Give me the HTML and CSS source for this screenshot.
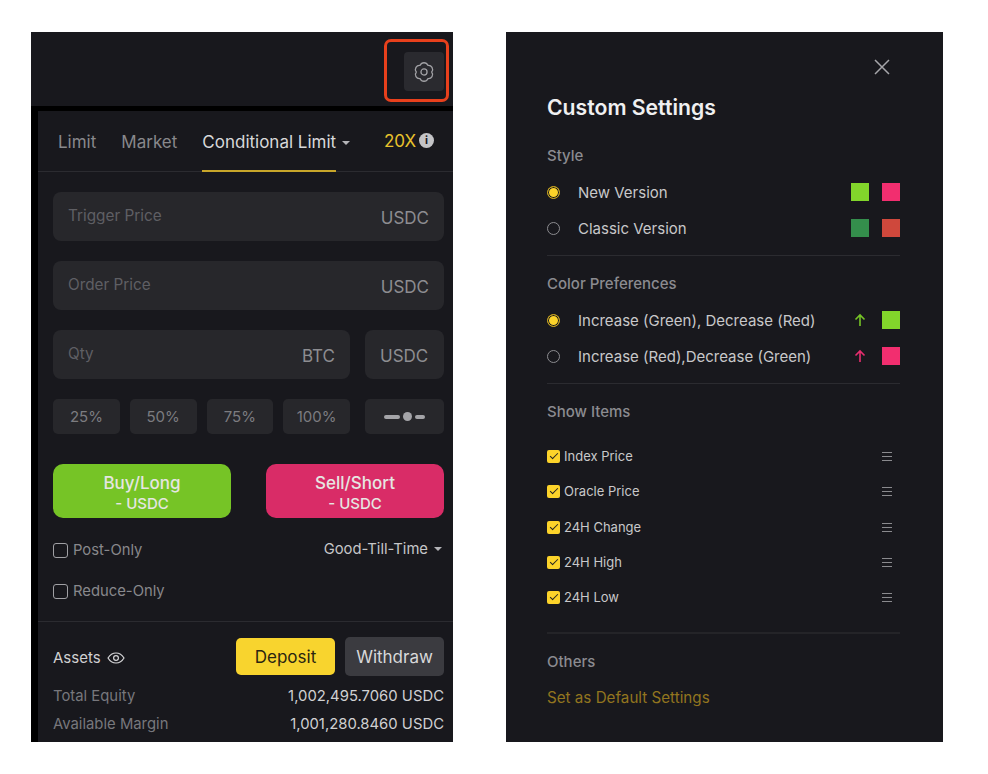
FILE: index.html
```html
<!DOCTYPE html>
<html lang="en">

<head>
    <meta charset="UTF-8" />
    <meta name="viewport" content="width=device-width, initial-scale=1.0" />
    <title>Custom Settings</title>
    <link rel="stylesheet" href="styles.css">
</head>

<body>
    <div class="page">
        <div class="trade">
            <div class="topbar">
                <div class="gear-mark">
                    <button class="gear">
                        <svg width="22" height="22" viewBox="0 0 18 18" fill="none" stroke="#a2a2a6" stroke-width="1.050">
                            <path d="M5.850 3.540A3.400 3.400 0 0 1 12.150 3.540A3.400 3.400 0 0 1 15.300 9A3.400 3.400 0 0 1 12.150 14.460A3.400 3.400 0 0 1 5.850 14.460A3.400 3.400 0 0 1 2.700 9A3.400 3.400 0 0 1 5.850 3.540Z" stroke-linejoin="round" />
                            <circle cx="9" cy="9" r="2.500" />
                        </svg>
                    </button>
                </div>
            </div>
            <div class="order">
                <div class="tabs">
                    <span class="tab">Limit</span>
                    <span class="tab">Market</span>
                    <span class="tab tab-active">Conditional Limit<i class="caret caret-tab"></i></span>
                    <span class="leverage">20X<b class="info">i</b></span>
                </div>
                <div class="form">
                    <div class="field"><span class="hint">Trigger Price</span><span class="unit">USDC</span></div>
                    <div class="field"><span class="hint">Order Price</span><span class="unit">USDC</span></div>
                    <div class="qty-row">
                        <div class="field field-qty"><span class="hint">Qty</span><span class="unit">BTC</span></div>
                        <div class="field field-unit"><span class="unit">USDC</span></div>
                    </div>
                    <div class="pct-row">
                        <div class="pct-group">
                            <span class="pct">25%</span>
                            <span class="pct">50%</span>
                            <span class="pct">75%</span>
                            <span class="pct">100%</span>
                        </div>
                        <span class="slider-btn"><i class="dash dash-long"></i><i class="dot"></i><i class="dash"></i></span>
                    </div>
                    <div class="action-row">
                        <button class="action buy">Buy/Long<small>- USDC</small></button>
                        <button class="action sell">Sell/Short<small>- USDC</small></button>
                    </div>
                    <div class="opt-row opt-row-first">
                        <label class="opt"><i class="box"></i>Post-Only</label>
                        <span class="tif">Good-Till-Time<i class="caret"></i></span>
                    </div>
                    <div class="opt-row">
                        <label class="opt"><i class="box"></i>Reduce-Only</label>
                    </div>
                </div>
                <div class="assets">
                    <div class="assets-head">
                        <span class="assets-title">Assets
                            <svg width="18" height="12" viewBox="0 0 18 12" fill="none" stroke="#d6d6d8" stroke-width="1.2">
                                <path d="M1 6c2-3.300 4.700-5 8-5s6 1.700 8 5c-2 3.300-4.700 5-8 5S3 9.300 1 6z" />
                                <circle cx="9" cy="6" r="2.400" />
                            </svg>
                        </span>
                        <div class="assets-btns">
                            <button class="deposit">Deposit</button>
                            <button class="withdraw">Withdraw</button>
                        </div>
                    </div>
                    <div class="stat stat-first"><span>Total Equity</span><b>1,002,495.7060 USDC</b></div>
                    <div class="stat"><span>Available Margin</span><b>1,001,280.8460 USDC</b></div>
                </div>
            </div>
        </div>

        <div class="settings">
            <div class="close-row">
                <svg width="16" height="16" viewBox="0 0 16 16" stroke="#a6a6aa" stroke-width="1.500">
                    <path d="M1 1l14 14M15 1L1 15" />
                </svg>
            </div>
            <h2>Custom Settings</h2>

            <h3 class="label label-style">Style</h3>
            <div class="row"><i class="radio radio-on"></i><span class="row-text">New Version</span><i class="swatch up"></i><i class="swatch down"></i></div>
            <div class="row"><i class="radio"></i><span class="row-text">Classic Version</span><i class="swatch up-classic"></i><i class="swatch down-classic"></i></div>
            <hr class="rule rule-style">

            <h3 class="label">Color Preferences</h3>
            <div class="row">
                <i class="radio radio-on"></i><span class="row-text">Increase (Green), Decrease (Red)</span>
                <svg class="arrow" width="14" height="14" viewBox="0 0 14 14" fill="none" stroke="#76c426" stroke-width="1.600"><path d="M7 13V2M2.500 6.500L7 2l4.500 4.500" /></svg>
                <i class="swatch up"></i>
            </div>
            <div class="row">
                <i class="radio"></i><span class="row-text">Increase (Red),Decrease (Green)</span>
                <svg class="arrow" width="14" height="14" viewBox="0 0 14 14" fill="none" stroke="#e62e6e" stroke-width="1.600"><path d="M7 13V2M2.500 6.500L7 2l4.500 4.500" /></svg>
                <i class="swatch down"></i>
            </div>
            <hr class="rule rule-color">

            <h3 class="label">Show Items</h3>
            <ul class="items">
                <li><i class="check"></i><span class="item-name">Index Price</span><i class="grip"></i></li>
                <li><i class="check"></i><span class="item-name">Oracle Price</span><i class="grip"></i></li>
                <li><i class="check"></i><span class="item-name">24H Change</span><i class="grip"></i></li>
                <li><i class="check"></i><span class="item-name">24H High</span><i class="grip"></i></li>
                <li><i class="check"></i><span class="item-name">24H Low</span><i class="grip"></i></li>
            </ul>
            <hr class="rule rule-items">

            <h3 class="label">Others</h3>
            <a class="default-link">Set as Default Settings</a>
        </div>
    </div>
</body>

</html>
```

FILE: styles.css
```css
:root {
    --panel: #18181d;
    --field: #27272b;
    --line: #2b2b30;
    --yellow: #fcd32a;
    --text: #d8d8da;
    --muted: #8b8b90;
    --hint: #5f5f64;
}

* {
    box-sizing: border-box;
}

body {
    margin: 0;
    background: white;
    font-family: 'Inter', sans-serif;
    color: var(--text);
}

.page {
    display: flex;
    gap: 53px;
    padding: 32px 0 0 31px;
}

button {
    font-family: inherit;
    border: none;
    cursor: pointer;
}

/* left panel */
.trade {
    width: 422px;
    height: 710px;
    background: black;
    overflow: hidden;
    display: flex;
    flex-direction: column;
}

.topbar {
    height: 74px;
    flex-shrink: 0;
    background: var(--panel);
    display: flex;
    justify-content: flex-end;
    padding: 7px 4px 0 0;
}

.gear-mark {
    width: 65px;
    height: 63px;
    border: 3px solid #e8401c;
    border-radius: 7px;
    padding: 10px 2px 0 17px;
}

.gear {
    width: 40px;
    height: 39px;
    background: #2a2a2f;
    border-radius: 4px;
    display: flex;
    align-items: center;
    justify-content: center;
    padding: 0;
}

.order {
    flex: 1;
    margin: 5px 0 0 7px;
    background: var(--panel);
}

.tabs {
    height: 61px;
    border-bottom: 1px solid var(--line);
    display: flex;
    padding-left: 20px;
    font-size: 17px;
    line-height: 62px;
    color: #88888c;
}

.tab {
    margin-right: 25px;
    height: 61px;
}

.tab-active {
    color: var(--text);
    border-bottom: 2px solid #c8a62a;
    margin-right: 0;
    width: 134px;
    white-space: nowrap;
}

.leverage {
    margin-left: auto;
    margin-right: 19px;
    color: #e8c22c;
    display: flex;
    align-items: center;
    height: 60px;
}

.info {
    width: 15px;
    height: 15px;
    border-radius: 50%;
    background: #c4c4c7;
    color: var(--panel);
    font-size: 11px;
    line-height: 15px;
    text-align: center;
    margin-left: 3px;
    margin-top: -2px;
}

.caret {
    display: inline-block;
    width: 0;
    height: 0;
    border-left: 4px solid transparent;
    border-right: 4px solid transparent;
    border-top: 4px solid #b4b4b8;
    margin-left: 6px;
    vertical-align: 3px;
}

.form {
    padding: 20px 9px 0 15px;
}

.field {
    height: 49px;
    background: var(--field);
    border-radius: 8px;
    display: flex;
    justify-content: space-between;
    padding: 0 15px;
    margin-bottom: 20px;
    font-size: 17px;
    line-height: 49px;
}

.hint {
    color: var(--hint);
    font-size: 15.300px;
    line-height: 48px;
}

.unit {
    color: #8d8d91;
    line-height: 52px;
}

.qty-row,
.pct-row {
    display: flex;
    justify-content: space-between;
}

.field-qty {
    width: 297px;
}

.field-unit {
    width: 79px;
}

.pct-group {
    display: flex;
    gap: 10px;
    width: 297px;
}

.pct,
.slider-btn {
    height: 35px;
    background: var(--field);
    border-radius: 5px;
    display: flex;
    align-items: center;
    justify-content: center;
    font-size: 15px;
    color: #7c7c80;
}

.pct {
    flex: 1;
}

.slider-btn {
    width: 79px;
    gap: 3px;
}

.dash {
    width: 10px;
    height: 4px;
    border-radius: 2px;
    background: #a4a4a8;
}

.dash-long {
    width: 16px;
}

.dot {
    width: 9px;
    height: 9px;
    border-radius: 50%;
    background: #a4a4a8;
}

.action-row {
    display: flex;
    justify-content: space-between;
    margin-top: 30px;
}

.action {
    width: 178px;
    height: 54px;
    border-radius: 10px;
    color: #e6e6e2;
    font-size: 17px;
    font-weight: 500;
    line-height: 22px;
    padding: 4px 0 0;
}

.action small {
    display: block;
    font-size: 15px;
    line-height: 20px;
}

.buy {
    background: #76c426;
}

.sell {
    background: #d92c67;
}

.opt-row {
    display: flex;
    justify-content: space-between;
    align-items: center;
    height: 20px;
    margin-top: 21px;
    font-size: 14.800px;
}

.opt-row-first {
    margin-top: 22px;
}

.opt {
    display: flex;
    align-items: center;
    color: #88888c;
}

.box {
    width: 15px;
    height: 15px;
    border: 1px solid #a0a0a4;
    border-radius: 3px;
    margin-right: 5px;
}

.tif {
    color: #c6c6c8;
    margin-right: 2px;
    position: relative;
    top: -1px;
}

.assets {
    margin-top: 20px;
    border-top: 1px solid var(--line);
    padding: 15px 9px 0 15px;
}

.assets-head {
    display: flex;
    justify-content: space-between;
    align-items: center;
}

.assets-title {
    display: flex;
    align-items: center;
    gap: 6px;
    margin-top: 2px;
    font-size: 15px;
    color: #d0d0d2;
}

.assets-btns {
    display: flex;
    align-items: center;
    gap: 10px;
}

.deposit,
.withdraw {
    width: 99px;
    font-size: 17px;
    border-radius: 5px;
    padding: 0;
}

.deposit {
    height: 37px;
    background: #f8d42e;
    color: #2a2510;
}

.withdraw {
    height: 39px;
    background: #3b3b40;
    color: var(--text);
}

.stat {
    display: flex;
    justify-content: space-between;
    height: 28px;
    line-height: 28px;
    font-size: 14.850px;
    color: #77777c;
}

.stat-first {
    margin-top: 6px;
}

.stat b {
    font-weight: 400;
    color: #d0d0d2;
}

/* right panel */
.settings {
    width: 437px;
    height: 710px;
    background: var(--panel);
    padding: 0 43px 0 41px;
}

.close-row {
    display: flex;
    justify-content: flex-end;
    padding: 27px 10px 0 0;
    height: 59px;
}

h2 {
    margin: 0;
    font-size: 21.200px;
    font-weight: 600;
    line-height: 32px;
    color: #f0f0f1;
}

.label {
    margin: 0;
    font-size: 15px;
    font-weight: 500;
    line-height: 20px;
    color: var(--muted);
}

.label-style {
    margin-top: 23px;
}

.row {
    display: flex;
    align-items: center;
    height: 36px;
    font-size: 15px;
    color: #c8c8ca;
}

.label + .row {
    margin-top: 8px;
}

.radio {
    width: 13px;
    height: 13px;
    border: 1px solid #8c8c90;
    border-radius: 50%;
    margin-right: 18px;
}

.radio-on {
    border-color: #c8a420;
    background: var(--yellow);
    box-shadow: inset 0 0 0 1px var(--panel);
}

.row-text {
    flex: 1;
}

.swatch {
    width: 18px;
    height: 18px;
    margin-left: 13px;
}

.up {
    background: #82d62b;
}

.down {
    background: #f22e6f;
}

.up-classic {
    background: #348e4c;
}

.down-classic {
    background: #cf483c;
}

.arrow {
    margin-right: 2px;
}

.rule {
    margin: 0;
    border: none;
    height: 1px;
    background: var(--line);
}

.rule-style,
.rule-color {
    margin: 9px 0 18px;
}

.items {
    list-style: none;
    margin: 17px 0 0;
    padding: 0;
}

.items li {
    display: flex;
    align-items: center;
    height: 35.300px;
    font-size: 13px;
    color: #c8c8ca;
}

.item-name {
    margin-top: -1px;
}

.check {
    width: 13px;
    height: 13px;
    background: var(--yellow);
    border-radius: 2px;
    margin-right: 4px;
    position: relative;
}

.check::after {
    content: "";
    position: absolute;
    left: 3px;
    top: 3px;
    width: 7px;
    height: 3px;
    border-left: 1.500px solid #222;
    border-bottom: 1.500px solid #222;
    transform: rotate(-45deg);
}

.grip {
    margin-left: auto;
    margin-right: 8px;
    width: 10px;
    height: 9px;
    border-top: 1px solid #8a8a8e;
    border-bottom: 1px solid #8a8a8e;
    position: relative;
}

.grip::after {
    content: "";
    position: absolute;
    left: 0;
    right: 0;
    top: 3px;
    height: 1px;
    background: #8a8a8e;
}

.rule-items {
    margin: 17px 0 18px;
    height: 2px;
    background: #242428;
}

.default-link {
    display: block;
    margin-top: 16px;
    font-size: 15.200px;
    line-height: 20px;
    color: #92751f;
}
```
